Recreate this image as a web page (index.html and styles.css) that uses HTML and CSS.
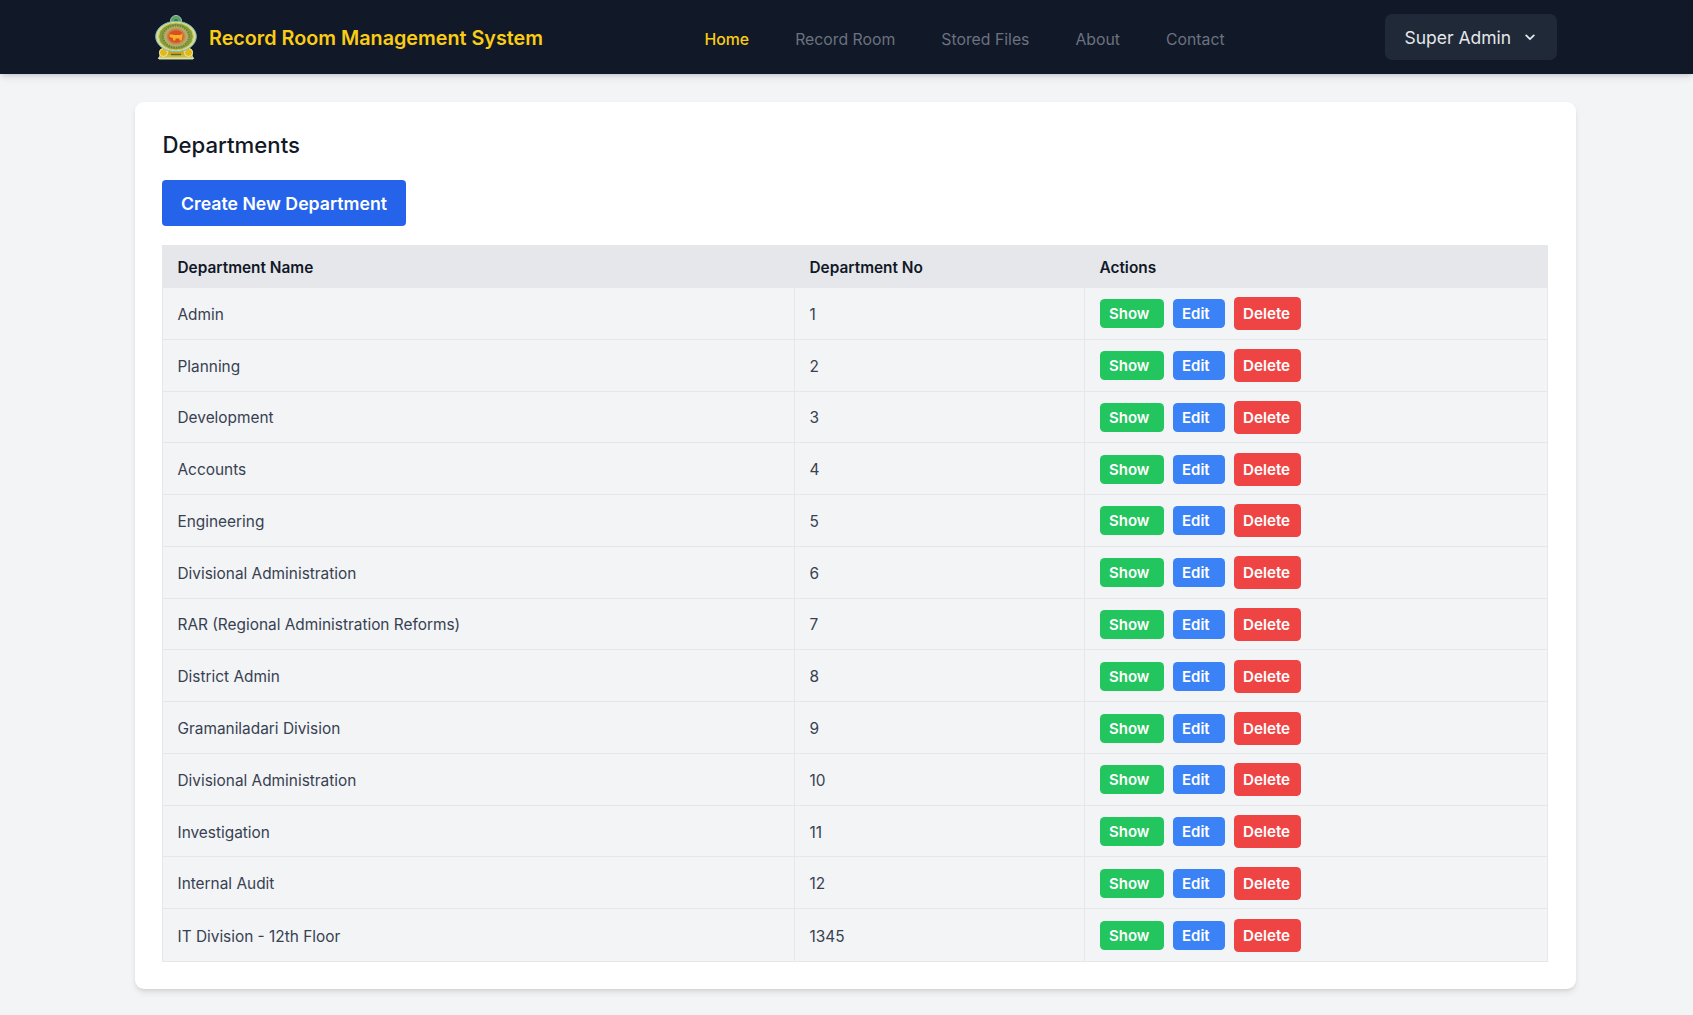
FILE: index.html
```html
<!DOCTYPE html>
<html lang="en">
<head>
<meta charset="utf-8">
<title>Record Room Management System</title>
<link rel="stylesheet" href="styles.css">
</head>
<body>
<header class="topbar">
  <a class="brand">
    <svg class="emblem" viewBox="0 0 44 46">
      <path d="M5 45l1-4q-2-5 4-7h24q6 2 4 7l1 4z" fill="#c9bd45" stroke="#c6d8a0" stroke-width="1"/>
      <circle cx="9.500" cy="38.500" r="4" fill="#e3b818" stroke="#eee6a0" stroke-width="1"/>
      <circle cx="34.500" cy="38.500" r="4" fill="#e3b818" stroke="#eee6a0" stroke-width="1"/>
      <path d="M16 36h12l2 5H14z" fill="#d8a21c"/>
      <path d="M17 40.500h10" stroke="#5d6d28" stroke-width="1.500"/>
      <path d="M4 44.300h36" stroke="#d9e3a3" stroke-width="1.600"/>
      <circle cx="22" cy="7" r="5.500" fill="#5d9b65" stroke="#9dc9b8" stroke-width="1"/>
      <circle cx="22" cy="7" r="2.800" fill="#2f794b" stroke="#88b568" stroke-width=".8"/>
      <ellipse cx="22" cy="22.500" rx="20.300" ry="15.200" fill="#d3dda0" stroke="#7cb9b6" stroke-width="1"/>
      <ellipse cx="22" cy="22.500" rx="17.300" ry="13.500" fill="#879c3d" stroke="#d6c74e" stroke-width="1"/>
      <ellipse cx="22" cy="22.500" rx="13" ry="11" fill="#b6ae57" stroke="#62854a" stroke-width="2" stroke-dasharray="1.500 1"/>
      <ellipse cx="22" cy="22.500" rx="9.500" ry="8.300" fill="#c58546" stroke="#bd9a78" stroke-width="1"/>
      <ellipse cx="22" cy="22.500" rx="7.600" ry="6.200" fill="#dc4d21"/>
      <path d="M15.500 20.500h3l1.500.5h6l2.500-1.500v3.500l-1 3.500h-2v-2h-4v2h-2.500v-2.500L15.500 23z" fill="#f4b22a"/>
    </svg>
    <span>Record Room Management System</span>
  </a>
  <nav class="nav">
    <a class="active">Home</a><a>Record Room</a><a>Stored Files</a><a>About</a><a>Contact</a>
  </nav>
  <button class="user">Super Admin
    <svg class="chevron" viewBox="0 0 10 7"><path d="M1.200 1.400L5 5.200l3.800-3.800" fill="none" stroke="currentColor" stroke-width="1.800" stroke-linecap="round" stroke-linejoin="round"/></svg>
  </button>
</header>
<main class="card">
  <h1>Departments</h1>
  <a class="create">Create New Department</a>
  <table>
    <thead><tr><th>Department Name</th><th>Department No</th><th>Actions</th></tr></thead>
    <tbody id="rows"></tbody>
  </table>
</main>
<script src="rows.js"></script>
</body>
</html>
```
FILE: styles.css
```css
* { box-sizing: border-box; }
body {
  margin: 0;
  min-height: 1015px;
  background: #f3f4f6;
  font-family: Inter, "Liberation Sans", sans-serif;
  font-size: 15.4px;
  color: #111827;
}
.topbar {
  display: flex;
  align-items: center;
  height: 74px;
  padding: 0 136px 0 154px;
  background: #111827;
  box-shadow: 0 4px 7px -1px rgba(0,0,0,.12), 0 2px 4px -2px rgba(0,0,0,.12);
}
.brand {
  display: flex;
  align-items: center;
  gap: 11px;
  width: 550.500px;
  color: #facc15;
  font-size: 19.75px;
  font-weight: 600;
  white-space: nowrap;
}
.brand span { padding-top: 1px; }
.emblem { width: 44px; height: 46px; }
.nav {
  display: flex;
  gap: 46px;
  padding-top: 4px;
  color: #6b7280;
  font-size: 15.800px;
  white-space: nowrap;
}
.nav .active { color: #facc15; font-weight: 500; }
.user {
  display: flex;
  align-items: center;
  gap: 14px;
  width: 172px;
  height: 46px;
  margin: 0 0 0 auto;
  padding: 0 0 0 19.500px;
  border: 0;
  border-radius: 7px;
  background: #1f2937;
  color: #e5e7eb;
  font: 400 17.5px Inter, "Liberation Sans", sans-serif;
  white-space: nowrap;
}
.chevron { width: 10px; height: 7px; }
.card {
  width: 1441px;
  height: 887px;
  margin: 28px 0 0 135px;
  padding: 27px 28px 0 27px;
  border-radius: 9px;
  background: #fff;
  box-shadow: 0 4px 7px -1px rgba(0,0,0,.1), 0 2px 4px -2px rgba(0,0,0,.12);
}
h1 {
  height: 32px;
  margin: 0 0 19px;
  padding-left: .5px;
  font-size: 22.200px;
  font-weight: 500;
  line-height: 32px;
}
.create {
  display: flex;
  align-items: center;
  justify-content: center;
  width: 244px;
  height: 46px;
  margin-bottom: 19px;
  border-radius: 4px;
  background: #2563eb;
  color: #fff;
  font-size: 17.700px;
  font-weight: 600;
}
table { display: block; border: 1px solid #e5e7eb; background: #f3f4f6; }
thead, tbody { display: block; }
tr { display: grid; grid-template-columns: 632px 290px 1fr; height: 51.770px; }
thead tr { height: 42px; background: #e5e7eb; }
th, td { display: flex; align-items: center; padding: 0 14.500px; }
th { font-weight: 600; font-size: 15.400px; }
td { padding-top: 2px; border-right: 1px solid #e5e7eb; border-bottom: 1px solid #e5e7eb; color: #374151; }
td:last-child { padding-top: 1px; border-right: 0; gap: 9px; }
tbody tr:last-child td { border-bottom: 0; }
.btn {
  height: 29px;
  padding: 0 0 0 9.500px;
  border-radius: 4.600px;
  color: #fff;
  font-weight: 600;
  line-height: 30px;
}
.show { width: 64px; background: #22c55e; font-size: 15px; }
.edit { width: 52px; background: #3b82f6; font-size: 15px; }
.delete { width: 67px; height: 33px; background: #ef4444; font-size: 15.200px; line-height: 34px; }
```
FILE: rows.js
```js
const departments = [
  ["Admin", 1], ["Planning", 2], ["Development", 3], ["Accounts", 4],
  ["Engineering", 5], ["Divisional Administration", 6],
  ["RAR (Regional Administration Reforms)", 7], ["District Admin", 8],
  ["Gramaniladari Division", 9], ["Divisional Administration", 10],
  ["Investigation", 11], ["Internal Audit", 12], ["IT Division - 12th Floor", 1345]
];
document.getElementById("rows").innerHTML = departments.map(([name, no]) =>
  `<tr><td>${name}</td><td>${no}</td><td><a class="btn show">Show</a><a class="btn edit">Edit</a><a class="btn delete">Delete</a></td></tr>`
).join("");
```
